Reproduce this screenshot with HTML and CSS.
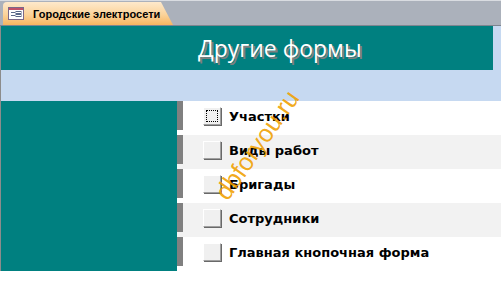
FILE: index.html
```html
<!DOCTYPE html>
<html lang="ru">
<head>
  <meta charset="UTF-8">
  <title>Городские электросети</title>
  <link rel="stylesheet" href="styles.css">
</head>
<body>
  <div class="tabbar">
    <div class="tab">
      <svg class="tab-icon" width="16" height="13" viewBox="0 0 16 13">
        <rect x="0.5" y="0.5" width="15" height="12" fill="#fff" stroke="#7a6a8a"/>
        <rect x="1" y="1" width="14" height="2" fill="#c0506a"/>
        <rect x="3" y="5" width="4" height="1" fill="#5a6a8a"/>
        <rect x="8" y="4.5" width="5" height="2" fill="none" stroke="#5a6a8a" stroke-width="1"/>
        <rect x="3" y="8" width="4" height="1" fill="#5a6a8a"/>
        <rect x="8" y="7.5" width="5" height="2" fill="none" stroke="#5a6a8a" stroke-width="1"/>
      </svg>
      <span class="tab-title">Городские электросети</span>
    </div>
  </div>

  <div class="form">
    <div class="form-header">
      <div class="caption">
        <h1>Другие формы</h1>
      </div>
      <div class="band"></div>
    </div>

    <div class="detail">
      <div class="row">
        <div class="selector"></div>
        <div class="bar"></div>
        <span class="btn focused"></span>
        <span class="label">Участки</span>
      </div>
      <div class="row alt">
        <div class="selector"></div>
        <div class="bar"></div>
        <span class="btn"></span>
        <span class="label">Виды работ</span>
      </div>
      <div class="row">
        <div class="selector"></div>
        <div class="bar"></div>
        <span class="btn"></span>
        <span class="label">Бригады</span>
      </div>
      <div class="row alt">
        <div class="selector"></div>
        <div class="bar"></div>
        <span class="btn"></span>
        <span class="label">Сотрудники</span>
      </div>
      <div class="row">
        <div class="selector"></div>
        <div class="bar"></div>
        <span class="btn"></span>
        <span class="label">Главная кнопочная форма</span>
      </div>
    </div>
  </div>

  <!-- watermark -->
  <span class="watermark">dbforyou.ru</span>
</body>
</html>
```

FILE: styles.css
```css
/* Global Reset */
* {
  margin: 0;
  padding: 0;
  box-sizing: border-box;
}

body {
  font-family: 'DejaVu Sans', Verdana, sans-serif;
  background: #fff;
  position: relative;
  height: 295px;
  overflow: hidden;
}

/* Document tab strip */
.tabbar {
  height: 26px;
  background: #abb1bb;
  border-top: 1px solid #d9dce1;
  border-bottom: 1px solid #7d8590;
  padding: 1px 0 0 3px;
}

.tab {
  width: 170px;
  height: 23px;
  display: flex;
  align-items: center;
  gap: 9px;
  padding-left: 5px;
  border-top-left-radius: 4px;
  background: linear-gradient(#fde9cc, #fbd39a 55%, #f7b560);
  clip-path: polygon(0 0, 158px 0, 170px 100%, 0 100%);
}

.tab-icon {
  flex: none;
}

.tab-title {
  font-family: 'Liberation Sans', Arial, sans-serif;
  font-weight: bold;
  font-size: 11px;
  color: #000;
}

/* Form */
.form {
  border-left: 1px solid #8c8c8c;
}

.form-header {
  background: #c6d9f1;
}

.caption {
  height: 44px;
  margin-right: 8px;
  background: #008080;
  padding: 7px 0 0 197px;
}

.caption h1 {
  font-family: 'Open Sans', sans-serif;
  font-weight: normal;
  font-size: 23px;
  line-height: 30px;
  color: #fff;
  text-shadow: 2px 2px 0 #7f7f7f;
}

.band {
  height: 31px;
}

/* Detail rows */
.row {
  height: 34px;
  display: flex;
  align-items: flex-start;
}

.row.alt {
  background: #f2f2f2;
}

.selector {
  width: 176px;
  height: 34px;
  background: #008080;
}

.bar {
  width: 6px;
  height: 29px;
  background: #808080;
}

.btn {
  width: 18px;
  height: 18px;
  margin: 6px 8px 0 20px;
  background: #f0f0f0;
  border-top: 1px solid #fff;
  border-left: 1px solid #fff;
  border-right: 1px solid #a0a0a0;
  border-bottom: 1px solid #a0a0a0;
  box-shadow: 1px 1px 0 #696969;
}

.btn.focused {
  outline: 1px dotted #000;
  outline-offset: -4px;
}

.label {
  font-weight: bold;
  font-size: 13px;
  line-height: 30px;
  padding-top: 1px;
  color: #000;
}

/* Watermark over the form */
.watermark {
  position: absolute;
  left: 257px;
  top: 145px;
  transform: translate(-50%, -50%) rotate(-55deg);
  font-family: 'Liberation Sans', Arial, sans-serif;
  font-size: 25px;
  color: rgba(240, 160, 0, 0.9);
  white-space: nowrap;
}
```
